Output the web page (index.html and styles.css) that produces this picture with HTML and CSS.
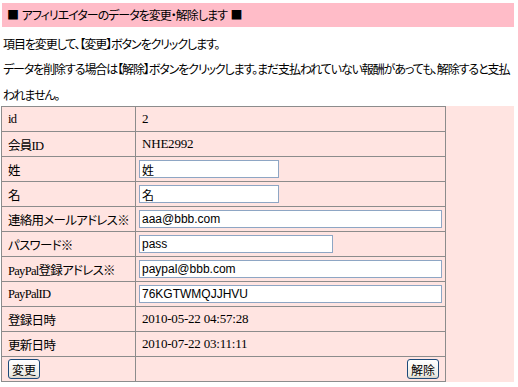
FILE: index.html
```html
<!DOCTYPE html>
<html lang="ja">
<head>
    <meta charset="UTF-8">
    <title>アフィリエイター変更・解除</title>
    <link rel="stylesheet" href="styles.css">
</head>
<body>
    <div class="page">
        <h1 class="title">■ アフィリエイターのデータを変更・解除します ■</h1>
        <p class="note">項目を変更して、【変更】ボタンをクリックします。</p>
        <p class="note note-wide">データを削除する場合は【解除】ボタンをクリックします。まだ支払われていない報酬があっても、解除すると支払われません。</p>
        <form class="form-area">
            <table class="edit-table">
                <colgroup>
                    <col class="col-label">
                    <col>
                </colgroup>
                <tr>
                    <td class="label">id</td>
                    <td class="value">2</td>
                </tr>
                <tr>
                    <td class="label">会員ID</td>
                    <td class="value">NHE2992</td>
                </tr>
                <tr>
                    <td class="label">姓</td>
                    <td class="value"><input type="text" class="in-short" value="姓"></td>
                </tr>
                <tr>
                    <td class="label">名</td>
                    <td class="value"><input type="text" class="in-short" value="名"></td>
                </tr>
                <tr>
                    <td class="label">連絡用メールアドレス※</td>
                    <td class="value"><input type="text" class="in-long" value="aaa@bbb.com"></td>
                </tr>
                <tr>
                    <td class="label">パスワード※</td>
                    <td class="value"><input type="text" class="in-mid" value="pass"></td>
                </tr>
                <tr>
                    <td class="label">PayPal登録アドレス※</td>
                    <td class="value"><input type="text" class="in-long" value="paypal@bbb.com"></td>
                </tr>
                <tr>
                    <td class="label">PayPalID</td>
                    <td class="value"><input type="text" class="in-long" value="76KGTWMQJJHVU"></td>
                </tr>
                <tr>
                    <td class="label">登録日時</td>
                    <td class="value">2010-05-22 04:57:28</td>
                </tr>
                <tr>
                    <td class="label">更新日時</td>
                    <td class="value">2010-07-22 03:11:11</td>
                </tr>
                <tr>
                    <td class="label"><button type="button" class="btn">変更</button></td>
                    <td class="value right"><button type="button" class="btn">解除</button></td>
                </tr>
            </table>
        </form>
    </div>
</body>
</html>
```

FILE: styles.css
```css
* {
    box-sizing: border-box;
}

body {
    margin: 0;
    background: #fff;
    color: #000;
    font-family: "Noto Sans CJK JP", sans-serif;
    font-size: 12px;
    font-feature-settings: "palt";
}

.page {
    width: 514px;
    padding: 3px 0 0 1px;
}

.title {
    margin: 0 0 0 1px;
    height: 24px;
    line-height: 24px;
    padding-left: 5px;
    background: #ffbcc8;
    font-size: 12px;
    font-weight: normal;
    letter-spacing: -1px;
    word-spacing: 2px;
}

.note {
    margin: 5px 0 0 2px;
    line-height: 24px;
    letter-spacing: -1.1px;
}

.note-wide {
    margin-top: 0;
    margin-bottom: -2px;
    line-height: 26px;
}

.form-area {
    margin: 0;
    background: #ffe4e1;
}

.edit-table {
    width: 445px;
    table-layout: fixed;
    border-collapse: collapse;
    background: #ffe4e1;
    font-family: "Liberation Serif", "Noto Sans CJK JP", serif;
    font-size: 13px;
}

.col-label {
    width: 134px;
}

.edit-table td {
    height: 25px;
    padding: 0;
    border: 1px solid #8c8c8c;
    vertical-align: middle;
    white-space: nowrap;
}

.label {
    padding-left: 6px !important;
    font-size: 12.5px;
    letter-spacing: -0.7px;
}

.value {
    padding-left: 6px !important;
    letter-spacing: -0.2px;
}

.right {
    text-align: right;
    padding-right: 6px !important;
}

.value input {
    display: block;
    height: 18px;
    margin-left: -3px;
    padding: 0 2px;
    border: 1px solid #8ea6c4;
    background: #fff;
    color: #000;
    font-family: "Liberation Sans", "Noto Sans CJK JP", sans-serif;
    font-size: 12px;
    letter-spacing: 0;
}

.in-short {
    width: 140px;
}

.in-mid {
    width: 194px;
}

.in-long {
    width: 303px;
}

.btn {
    height: 20px;
    padding: 0 3px;
    border: 1px solid #1d4a7a;
    border-radius: 3px;
    background: linear-gradient(#ffffff, #ecebe4 85%, #d6d0c5);
    color: #000;
    font-family: "Noto Sans CJK JP", sans-serif;
    font-size: 12px;
    letter-spacing: 0;
    vertical-align: middle;
}
```
